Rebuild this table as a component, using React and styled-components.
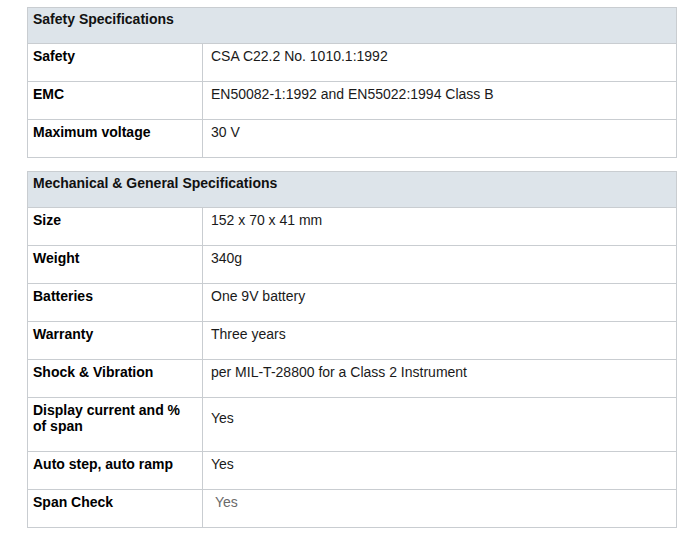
import React from "react"
import styled, { createGlobalStyle } from 'styled-components'

const GlobalStyle = createGlobalStyle`
  html, body {
    margin: 0;
    padding: 0;
    background: #fff;
  }

  body {
    font: 14px "Liberation Sans", Arial, sans-serif;
    color: #111;
  }
`

const Page = styled.div`
  padding: 7px 0 0 27px;
  display: flex;
  flex-direction: column;
  gap: 13px;
`

const Table = styled.table`
  width: 650px;
  border-collapse: collapse;
  table-layout: fixed;
`

const Col = styled.col`
  width: ${p => p.$width};
`

const HeadCell = styled.th`
  background: #dde4ea;
  border: 1px solid #c9cdd1;
  text-align: left;
  font-weight: bold;
  line-height: 16px;
  padding: 3px 5px 16px 5px;
  color: #111;
`

const Label = styled.td`
  border: 1px solid #c9cdd1;
  font-weight: bold;
  line-height: 16px;
  padding: 4px 5px 17px 5px;
  vertical-align: middle;
  color: #000;
`

const Value = styled.td`
  border: 1px solid #c9cdd1;
  line-height: 16px;
  padding: 4px 8px 17px 8px;
  vertical-align: middle;
  color: #1a1a1a;
`

const Muted = styled.span`
  color: #6a6a6a;
`

const sections = [
  {
    title: 'Safety Specifications',
    rows: [
      ['Safety', 'CSA C22.2 No. 1010.1:1992'],
      ['EMC', 'EN50082-1:1992 and EN55022:1994 Class B'],
      ['Maximum voltage', '30 V'],
    ],
  },
  {
    title: 'Mechanical & General Specifications',
    rows: [
      ['Size', '152 x 70 x 41 mm'],
      ['Weight', '340g'],
      ['Batteries', 'One 9V battery'],
      ['Warranty', 'Three years'],
      ['Shock & Vibration', 'per MIL-T-28800 for a Class 2 Instrument'],
      ['Display current and % of span', 'Yes'],
      ['Auto step, auto ramp', 'Yes'],
      ['Span Check', <Muted>{'\u00a0Yes'}</Muted>],
    ],
  },
]

export default function App() {
  return (
    <>
      <GlobalStyle />
      <Page>
        {sections.map(section => (
          <Table key={section.title}>
            <colgroup>
              <Col $width="175px" />
              <Col $width="auto" />
            </colgroup>
            <thead>
              <tr>
                <HeadCell colSpan={2}>{section.title}</HeadCell>
              </tr>
            </thead>
            <tbody>
              {section.rows.map(([label, value]) => (
                <tr key={label}>
                  <Label>{label}</Label>
                  <Value>{value}</Value>
                </tr>
              ))}
            </tbody>
          </Table>
        ))}
      </Page>
    </>
  )
}
